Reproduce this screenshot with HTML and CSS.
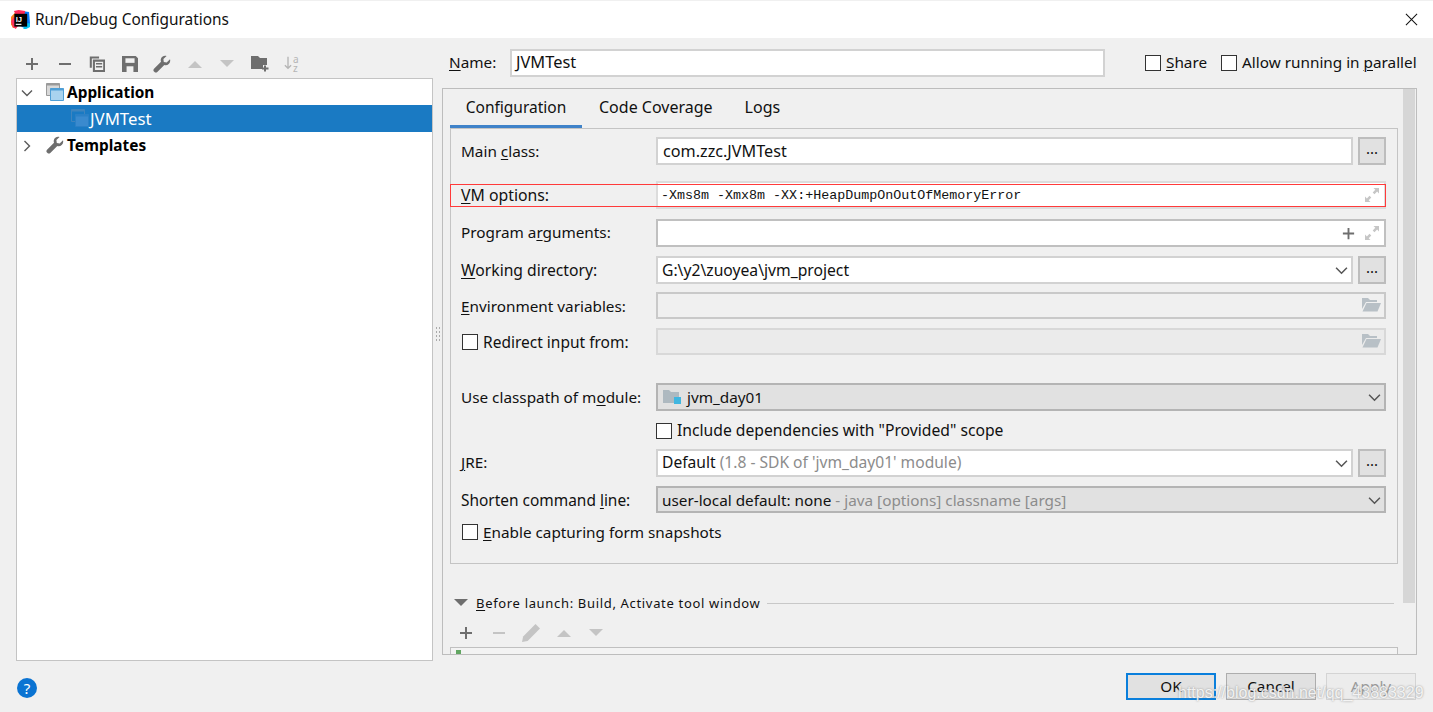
FILE: index.html
```html
<!DOCTYPE html>
<html lang="en">
<head>
<meta charset="utf-8">
<title>Run/Debug Configurations</title>
<link rel="stylesheet" href="styles.css">
</head>
<body>
<svg class="defs" width="0" height="0" aria-hidden="true">
  <symbol id="i-plus" viewBox="0 0 16 16"><path d="M8 2v12M2 8h12" fill="none" stroke="currentColor" stroke-width="2"/></symbol>
  <symbol id="i-minus" viewBox="0 0 16 16"><path d="M2 8h12" fill="none" stroke="currentColor" stroke-width="2"/></symbol>
  <symbol id="i-up" viewBox="0 0 16 16"><path d="M1 12L8 5l7 7z" fill="currentColor"/></symbol>
  <symbol id="i-down" viewBox="0 0 16 16"><path d="M1 4h14l-7 7z" fill="currentColor"/></symbol>
  <symbol id="i-chev" viewBox="0 0 12 12"><path d="M1 3.500l5 5 5-5" fill="none" stroke="currentColor" stroke-width="1.400"/></symbol>
  <symbol id="i-expand" viewBox="0 0 16 16"><path d="M9.500 1H15v5.500l-1.900-1.900-2.600 2.600-1.800-1.800 2.600-2.600zM6.500 15H1V9.500l1.900 1.900 2.600-2.600 1.800 1.800-2.600 2.600z" fill="currentColor"/></symbol>
  <symbol id="i-folder" viewBox="0 0 20 16"><path d="M1 1h6l2 2h7v2H5L1 12z" fill="currentColor"/><path d="M5.500 6H20l-3.500 8.500H1.500z" fill="currentColor"/></symbol>
  <symbol id="i-wrench" viewBox="0 0 18 18"><path d="M17 4.200l-3.300 3.200-2.900-.4-.4-2.900L13.600 1C11 .2 8.300 1.700 7.800 4.200c-.2.900-.1 1.800.2 2.500L1 13.700c-.8.800-.8 2 0 2.800l.5.500c.8.800 2 .8 2.800 0l7-7c2.800.9 5.700-1.100 5.900-4 0-.9 0-1.300-.2-1.800z" fill="currentColor"/></symbol>
  <symbol id="i-app" viewBox="0 0 18 18"><path d="M.5.500h13v12H.5z" fill="#d8d8d8" stroke="#9a9a9a"/><path d="M.5.500h13v2H.5z" fill="#9a9a9a"/><path d="M4.500 5.500h13v12h-13z" fill="#a9d3ef" stroke="#4f9fd6"/><path d="M4.500 5.500h13v2h-13z" fill="#4f9fd6"/></symbol>
  <symbol id="i-app-sel" viewBox="0 0 18 18"><path d="M.5.500h13v12H.5z" fill="none" stroke="#3f84bd"/><path d="M.5.500h13v2H.5z" fill="#3f84bd"/><path d="M4.500 5.500h13v12h-13z" fill="#3a8ace" stroke="#2b80c6"/><path d="M4.500 5.500h13v2h-13z" fill="#2b80c6"/></symbol>
</svg>

<div class="dialog">
  <header class="titlebar">
    <svg class="logo" viewBox="0 0 20 20" aria-hidden="true">
      <path d="M0 7l6-6 4 3-5 15H2l-2-4z" fill="#fc801d"/>
      <path d="M0 12l3-5 5 9-3 4-3-2z" fill="#fe315d"/>
      <path d="M11 1l8 1 1 12-3 5-6-1z" fill="#087cfa"/>
      <path d="M3 1l5-1 7 1-1 4H5z" fill="#fe2857"/>
      <path d="M14 14h6v4l-4 2h-3z" fill="#07c3f2"/>
      <rect x="3.500" y="4" width="13.500" height="13.500" fill="#000"/>
      <rect x="5" y="14.500" width="6" height="1.200" fill="#fff"/>
      <text x="5" y="12.500" class="logo-text">IJ</text>
    </svg>
    <span class="title">Run/Debug Configurations</span>
    <svg class="close" viewBox="0 0 14 14" aria-hidden="true"><path d="M1 1l12 12M13 1L1 13" fill="none" stroke="#111" stroke-width="1.100"/></svg>
  </header>

  <div class="content">
    <aside class="left">
      <div class="toolbar">
        <svg class="ti dark"><use href="#i-plus"/></svg>
        <svg class="ti dark"><use href="#i-minus"/></svg>
        <svg class="ti dark" viewBox="0.500 0.500 15 15.500"><path d="M1 1h9v2H3v9H1z" fill="currentColor"/><path d="M5 5h10v10H5z" fill="none" stroke="currentColor" stroke-width="2"/><path d="M7 8h6M7 11h6" stroke="currentColor" stroke-width="1.500"/></svg>
        <svg class="ti dark" viewBox="1 1 14 14"><path d="M1 1h12l2 2v12H1z" fill="currentColor"/><path d="M4 3h8v4H4z" fill="#f0f0f0"/><path d="M5 10h6v5H5z" fill="#f0f0f0"/></svg>
        <svg class="ti-lg dark"><use href="#i-wrench"/></svg>
        <svg class="ti faint"><use href="#i-up"/></svg>
        <svg class="ti faint"><use href="#i-down"/></svg>
        <svg class="ti-lg dark" viewBox="0 0 18 16"><path d="M0 0h7l2 2h7v7h-4v4H0z" fill="currentColor"/><path d="M14 9.500v6M11 12.500h6.500" stroke="currentColor" stroke-width="2"/></svg>
        <span class="sort" aria-hidden="true"><svg viewBox="0 0 9 16" class="sort-arrow"><path d="M4.500 1v13M1 10.500l3.500 3.500 3.500-3.500" fill="none" stroke="currentColor" stroke-width="1.500"/></svg><span class="sort-az"><span>a</span><span>z</span></span></span>
      </div>
      <div class="tree">
        <div class="node bold"><svg class="chev"><use href="#i-chev"/></svg><svg class="node-icon"><use href="#i-app"/></svg><span>Application</span></div>
        <div class="node selected"><svg class="node-icon"><use href="#i-app-sel"/></svg><span>JVMTest</span></div>
        <div class="node bold"><svg class="chev closed"><use href="#i-chev"/></svg><svg class="node-icon tools"><use href="#i-wrench"/></svg><span>Templates</span></div>
      </div>
    </aside>

    <div class="splitter" aria-hidden="true"><i></i><i></i><i></i><i></i></div>

    <main class="right">
      <div class="name-row">
        <label class="name-label"><u>N</u>ame:</label>
        <div class="field name-field">JVMTest</div>
        <label class="check share"><span class="box"></span><span><u>S</u>hare</span></label>
        <label class="check parallel"><span class="box"></span><span>Allow running in <u>p</u>arallel</span></label>
      </div>

      <section class="panel">
        <div class="scroll-thumb"></div>
        <nav class="tabs">
          <span class="tab active">Configuration</span>
          <span class="tab cov">Code Coverage</span>
          <span class="tab logs">Logs</span>
        </nav>
        <div class="config">
          <div class="row r-main"><label>Main <u>c</u>lass:</label><div class="field-wrap"><div class="field grow">com.zzc.JVMTest</div><button class="more">...</button></div></div>

          <div class="row r-vm"><label><u>V</u>M options:</label><div class="field-wrap"><div class="field grow mono">-Xms8m -Xmx8m -XX:+HeapDumpOnOutOfMemoryError<svg class="expand"><use href="#i-expand"/></svg></div></div></div>

          <div class="row r-prog"><label>Program a<u>r</u>guments:</label><div class="field-wrap"><div class="field grow strong-border"><svg class="inner-plus"><use href="#i-plus"/></svg><svg class="expand"><use href="#i-expand"/></svg></div></div></div>

          <div class="row r-wd"><label><u>W</u>orking directory:</label><div class="field-wrap"><div class="field grow tight">G:\y2\zuoyea\jvm_project<svg class="chev-in"><use href="#i-chev"/></svg></div><button class="more">...</button></div></div>

          <div class="row r-env"><label><u>E</u>nvironment variables:</label><div class="field-wrap"><div class="field grow disabled"><svg class="folder"><use href="#i-folder"/></svg></div></div></div>

          <div class="row r-red"><label class="check-label"><span class="box"></span>Redirect input from:</label><div class="field-wrap"><div class="field grow disabled soft"><svg class="folder"><use href="#i-folder"/></svg></div></div></div>

          <div class="row r-mod"><label>Use classpath of m<u>o</u>dule:</label><div class="field-wrap"><div class="field grow combo tight"><svg class="mod-icon" viewBox="0 0 18 16"><path d="M0 1h6l2 2h8v11H0z" fill="#aeb9c0"/><path d="M11 8h7v7h-7z" fill="#40b6e0"/></svg>jvm_day01<svg class="chev-in"><use href="#i-chev"/></svg></div></div></div>

          <div class="row r-inc"><span></span><label class="check-label"><span class="box"></span><span class="inc-text">Include dependencies with "Provided" scope</span></label></div>

          <div class="row r-jre"><label><u>J</u>RE:</label><div class="field-wrap"><div class="field grow tight">Default&nbsp;<span class="muted">(1.8 - SDK of 'jvm_day01' module)</span><svg class="chev-in"><use href="#i-chev"/></svg></div><button class="more">...</button></div></div>

          <div class="row r-short"><label>Shorten command <u>l</u>ine:</label><div class="field-wrap"><div class="field grow combo tight">user-local default: none&nbsp;<span class="muted">- java [options] classname [args]</span><svg class="chev-in"><use href="#i-chev"/></svg></div></div></div>

          <div class="row r-snap"><label class="check-label wide"><span class="box"></span><span><u>E</u>nable capturing form snapshots</span></label></div>

          <div class="vm-highlight" aria-hidden="true"></div>
        </div>

        <div class="before">
          <svg class="before-tri"><use href="#i-down"/></svg>
          <span class="before-text"><u>B</u>efore launch: Build, Activate tool window</span>
          <span class="before-line"></span>
        </div>
        <div class="before-tools">
          <svg class="bi dark"><use href="#i-plus"/></svg>
          <svg class="bi faint"><use href="#i-minus"/></svg>
          <svg class="bi pencil faint" viewBox="0 0 16 16"><path d="M12 0l4 4L5 15l-5 1 1-5z" fill="currentColor"/></svg>
          <svg class="bi faint"><use href="#i-up"/></svg>
          <svg class="bi faint"><use href="#i-down"/></svg>
        </div>
        <div class="before-table"><i class="tick"></i></div>
      </section>
    </main>
  </div>

  <footer class="footer">
    <div class="help">?</div>
    <div class="buttons">
      <button class="btn ok">OK</button>
      <button class="btn">Cancel</button>
      <button class="btn off">Apply</button>
    </div>
    <div class="watermark">https://blog.csdn.net/qq_43883329</div>
  </footer>
</div>
</body>
</html>
```

FILE: styles.css
```css
* { box-sizing: border-box; }
html, body { margin: 0; padding: 0; }
body {
  width: 1433px; height: 712px; overflow: hidden;
  background: #f0f0f0; color: #111;
  font-family: "Noto Sans", "Liberation Sans", sans-serif;
  font-size: 15.300px;
}
.defs { position: absolute; }
u { text-underline-offset: 2px; text-decoration-thickness: 1px; }
svg { display: block; flex: none; }

.dialog { width: 1433px; height: 712px; display: flex; flex-direction: column; }

/* title bar */
.titlebar { height: 38px; background: #fff; border-top: 1px solid #f0f0f0; display: flex; align-items: center; padding: 0 15px 1px 11px; }
.logo { width: 19px; height: 19px; }
.logo-text { font: 700 8px "Liberation Sans", sans-serif; fill: #fff; }
.title { margin-left: 5px; font-size: 15.400px; }
.close { width: 13px; height: 13px; margin-left: auto; }

.content { flex: 1; display: flex; min-height: 0; }

/* left side */
.left { width: 417px; margin-left: 16px; padding-top: 12px; display: flex; flex-direction: column; }
.toolbar { height: 28px; display: flex; align-items: center; padding-left: 8px; gap: 16.500px; color: #6e6e6e; padding-bottom: 1px; }
.ti { width: 16px; height: 16px; }
.ti-lg { width: 18px; height: 18px; margin: 0 -1px; }
.dark { color: #6e6e6e; }
.faint { color: #c4c4c4; }
.sort { display: flex; color: #b5b5b5; width: 18px; height: 18px; }
.sort-arrow { width: 8px; height: 16px; }
.sort-az { display: flex; flex-direction: column; font-size: 10px; line-height: 9px; margin-left: 1px; }
.tree { flex: 1; background: #fff; border: 1px solid #c4c4c4; }
.node { height: 26px; display: flex; align-items: center; padding-left: 50px; position: relative; color: #000; }
.node-icon { width: 18px; height: 18px; margin-left: -21px; margin-right: 3px; }
.selected { background: #1a7ac3; color: #fff; padding: 0 0 1px 75px; height: 27px; font-size: 16.800px; }
.selected .node-icon { margin-left: -21px; margin-right: 1px; }
.bold { font-weight: 700; font-size: 15.400px; }
.chev { width: 12px; height: 12px; position: absolute; left: 4px; top: 8px; color: #5a5a5a; }
.chev.closed { transform: rotate(-90deg); }
.tools { color: #6e6e6e; margin-right: 3px; margin-left: -21px; }

.splitter { width: 9px; display: flex; flex-direction: column; align-items: center; justify-content: center; gap: 2px; padding-bottom: 31px; padding-left: 1px; }
.splitter i { width: 4px; height: 2px; border-left: 1px solid #aaa; border-right: 1px solid #aaa; }

/* right side */
.right { width: 975px; padding-top: 11px; }
.name-row { height: 28px; display: flex; align-items: center; padding-left: 7px; line-height: 26px; }
.name-label { width: 61px; padding-bottom: 2px; }
.field { height: 100%; background: #fff; border: 2px solid #d2d2d2; display: flex; align-items: center; padding-left: 5px; position: relative; white-space: pre; }
.tight { padding-left: 4px; }
.name-field { width: 595px; font-size: 16.400px; padding-left: 4px; padding-bottom: 2px; }
.check { display: flex; align-items: center; gap: 5px; padding-bottom: 2px; }
.check .box { margin-top: 1px; }
.share { margin-left: 40px; }
.parallel { margin-left: 14px; }
.box { width: 16px; height: 16px; flex: none; background: #fff; border: 1px solid #333; display: inline-block; }

.panel { margin-top: 11px; height: 567px; border: 1px solid #bdbdbd; position: relative; overflow: hidden; }
.scroll-thumb { position: absolute; left: 960px; top: 0; width: 12px; height: 514px; background: #d6d6d6; }
.tabs { height: 39px; display: flex; padding-left: 7px; font-size: 16px; }
.tab { height: 39px; line-height: 36px; }
.tab.active { width: 132px; text-align: center; border-bottom: 3px solid #4083c9; font-size: 15.500px; }
.tab.cov { margin-left: 17px; }
.tab.logs { margin-left: 32px; }

.config { margin-left: 7px; width: 948px; height: 436px; border: 1px solid #c4c4c4; padding: 8px 11px 0 10px; position: relative; }
.row { display: grid; grid-template-columns: 195px 1fr; height: 28px; align-items: center; line-height: 20px; }
.row > label { white-space: nowrap; }
.field-wrap { display: flex; gap: 5px; height: 100%; }
.grow { flex: 1; min-width: 0; }
.more { width: 28px; height: 100%; background: #e1e1e1; border: 2px solid #bdbdbd; padding: 0 0 6px; font: 15px "Noto Sans", sans-serif; color: #111; line-height: 1; }
.r-main .field { font-size: 16.200px; }
.r-vm { margin-top: 16px; }
.r-vm > label { font-size: 15.800px; }
.r-prog { margin-top: 10px; }
.r-prog > label { padding-bottom: 2px; }
.r-wd { margin-top: 9px; }
.r-wd > label, .r-wd .field { font-size: 15.700px; }
.r-env { margin-top: 8px; height: 27px; }
.r-red { margin-top: 9px; height: 27px; }
.r-red > label { font-size: 15.500px; }
.r-mod { margin-top: 28px; }
.r-inc { margin-top: 12px; height: 16px; }
.r-inc > label { font-size: 15.700px; }
.inc-text { margin-top: -2px; }
.r-jre { margin-top: 10px; }
.r-jre .field { font-size: 15.600px; padding-bottom: 2px; }
.r-jre > label { padding-bottom: 2px; }
.r-short { margin-top: 9px; height: 27px; }
.r-short > label { font-size: 15.450px; }
.r-snap { margin-top: 11px; height: 16px; display: block; }

.check-label { display: flex; align-items: center; gap: 5px; white-space: nowrap; line-height: 16px; }
.r-red .check-label, .r-snap .check-label { margin-left: 1px; }

.mono { font: 13.350px "Liberation Mono", monospace; padding-left: 3px; border-color: #dcdcdc; }
.strong-border { border-color: #c0c0c0; }
.expand { width: 16px; height: 16px; position: absolute; right: 4px; top: 4px; color: #c6c6c6; }
.inner-plus { width: 15px; height: 15px; position: absolute; right: 28px; top: 5px; color: #6e6e6e; }
.chev-in { width: 13px; height: 13px; position: absolute; right: 3px; top: 6px; color: #555; }
.disabled { background: #f0f0f0; border-color: #c9c9c9; }
.soft { background: #ebebeb; border-color: #d8d8d8; }
.folder { width: 20px; height: 16px; position: absolute; right: 3px; top: 3px; color: #b8c0c6; }
.combo { background: #e1e1e1; border-color: #b4b4b4; }
.mod-icon { width: 18px; height: 16px; margin: 0 6px 0 1px; }
.muted { color: #8c8c8c; }
.vm-highlight { position: absolute; left: -1px; top: 55px; width: 936px; height: 23px; border: 1px solid #ff3a3a; }

.before { height: 16px; margin-top: 31px; display: flex; align-items: center; padding-left: 10px; letter-spacing: .670px; font-size: 13px; }
.before-tri { width: 16px; height: 16px; color: #6e6e6e; margin-right: 7px; }
.before-text { white-space: nowrap; }
.before-line { width: 627px; height: 1px; background: #c8c8c8; margin-left: 7px; }
.before-tools { height: 22px; margin-top: 11px; display: flex; align-items: center; padding-left: 15px; gap: 16.500px; }
.bi { width: 16px; height: 16px; }
.pencil { width: 18px; height: 18px; margin: 0 -1px; }
.before-table { margin: 3px 0 0 7px; width: 948px; height: 20px; border: 1px solid #c0c0c0; position: relative; background: #f3f3f3; }
.tick { position: absolute; left: 5px; top: 2px; width: 5px; height: 4px; background: #62a662; }

/* footer */
.footer { height: 51px; position: relative; display: flex; align-items: flex-start; padding: 12px 17px 0 17px; }
.help { width: 20px; height: 20px; margin-top: 5px; border-radius: 50%; background: #0a73d2; color: #fff; text-align: center; font: 15px/20px "Noto Sans", sans-serif; }
.buttons { margin-left: auto; display: flex; gap: 10px; }
.btn { width: 90px; height: 27px; background: #e1e1e1; border: 1px solid #adadad; font: 15.300px "Noto Sans", sans-serif; color: #111; padding: 0 0 2px; }
.ok { border: 2px solid #0a7fdc; }
.off { background: #ececec; border-color: #d4d4d4; color: #9a9a9a; }
.watermark { position: absolute; left: 1178px; top: 22px; font: 16px/20px "Liberation Sans", sans-serif; color: rgba(255,255,255,.85); text-shadow: 0 0 2px rgba(130,130,130,.9); white-space: nowrap; }
```
